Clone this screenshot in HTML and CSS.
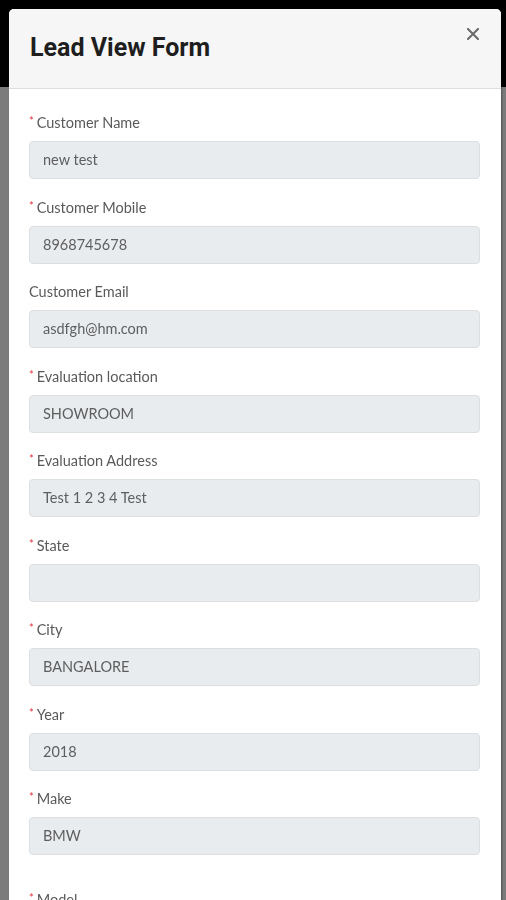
FILE: index.html
```html
<!DOCTYPE html>
<html>
<head>
    <link rel="stylesheet" href="styles.css">
</head>
<body>

    <div class="apptop"></div>

    <div class="overlay">
        <div class="modal">
            <div class="mheader">
                <h2 class="mtitle">Lead View Form</h2>
                <span class="close">
                    <svg width="12" height="12" viewBox="0 0 12 12">
                        <path d="M1 1L11 11M11 1L1 11" stroke="#6b6b6b" stroke-width="2.1" stroke-linecap="square"/>
                    </svg>
                </span>
            </div>

            <div class="mbody">
                <div class="field">
                    <label><span class="req">*</span>Customer Name</label>
                    <div class="finput">new test</div>
                </div>
                <div class="field">
                    <label><span class="req">*</span>Customer Mobile</label>
                    <div class="finput">8968745678</div>
                </div>
                <div class="field">
                    <label>Customer Email</label>
                    <div class="finput">asdfgh@hm.com</div>
                </div>
                <div class="field">
                    <label><span class="req">*</span>Evaluation location</label>
                    <div class="finput">SHOWROOM</div>
                </div>
                <div class="field">
                    <label><span class="req">*</span>Evaluation Address</label>
                    <div class="finput">Test 1 2 3 4 Test</div>
                </div>
                <div class="field">
                    <label><span class="req">*</span>State</label>
                    <div class="finput"></div>
                </div>
                <div class="field">
                    <label><span class="req">*</span>City</label>
                    <div class="finput">BANGALORE</div>
                </div>
                <div class="field">
                    <label><span class="req">*</span>Year</label>
                    <div class="finput">2018</div>
                </div>
                <div class="field lastsel">
                    <label><span class="req">*</span>Make</label>
                    <div class="finput">BMW</div>
                </div>
                <div class="field">
                    <label><span class="req">*</span>Model</label>
                    <div class="finput"></div>
                </div>
            </div>
        </div>
    </div>

</body>
</html>
```

FILE: styles.css
```css
*{
    margin: 0;
    padding: 0;
    box-sizing: border-box;
}
body {
    font-family: Lato, "Open Sans", sans-serif;
    background-color: #7b7b7b;
    height: 900px;
    overflow: hidden;
}

.apptop{
    height: 87px;
    background-color: #000;
}

.overlay{
    position: fixed;
    top: 0;
    left: 0;
    right: 0;
    bottom: 0;
    padding: 9px 5px 0 9px;
}

.modal{
    background-color: #fff;
    border-radius: 5px;
    box-shadow: 1px 0 2px rgba(0,0,0,0.35);
}

.mheader{
    display: flex;
    justify-content: space-between;
    align-items: flex-start;
    height: 80px;
    padding: 0 22px 0 21px;
    background-color: #f6f6f6;
    border-bottom: 1px solid #dedede;
    border-radius: 5px 5px 0 0;
}

.mtitle{
    font-family: Roboto, sans-serif;
    font-weight: 700;
    font-size: 25px;
    line-height: 78px;
    color: #1e1e1e;
}

.close{
    display: flex;
    margin-top: 19px;
    cursor: pointer;
}

.mbody{
    padding: 24px 21px 0 20px;
}

.field{
    margin-bottom: 18.5px;
}

.field.lastsel{
    margin-bottom: 35px;
}

.field label{
    display: block;
    font-size: 14.5px;
    line-height: 20px;
    color: #5a5a5a;
    margin-bottom: 8px;
}

.req{
    color: #e0303b;
    font-size: 11px;
    vertical-align: top;
    margin-right: 3px;
    line-height: 16px;
}

.finput{
    height: 38px;
    line-height: 36px;
    padding: 0 13px;
    font-size: 14.5px;
    color: #5e5e5e;
    background-color: #e9ecef;
    border: 1px solid #dcdfe2;
    border-radius: 4px;
}
```
